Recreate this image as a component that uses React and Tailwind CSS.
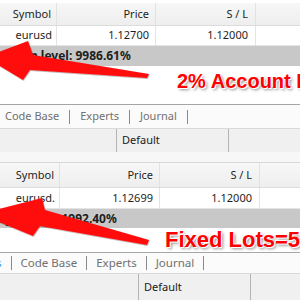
import React from 'react';

const ui = "font-['Noto_Sans',sans-serif] text-[11px] text-[#1e1e1e]";

const Panel = ({ cols, symbol, price, sl, levelText, levelOffset, note, noteClass, whiteH, tabs, statusLeft, statusWidth, headH, rowH, barH, tabH, statusH, topStrip }) => (
  <div className={`flex flex-col ${ui}`}>
    {topStrip}
    {/* header */}
    <div className={`flex ${headH} border-b border-[#dcdcdc] bg-gradient-to-b from-[#f7f7f7] to-[#eeeeee]`}>
      <div className={`${cols[0]} flex items-center justify-end pr-[5px] border-r border-[#e2e2e2]`}>Symbol</div>
      <div className={`${cols[1]} flex items-center justify-end pr-[6px] border-r border-[#e2e2e2]`}>Price</div>
      <div className={`${cols[2]} flex items-center justify-end pr-[7px] border-r border-[#e2e2e2]`}>S / L</div>
      <div className="flex-1" />
    </div>
    {/* data row */}
    <div className={`flex ${rowH} bg-white border-b border-[#e4e4e4]`}>
      <div className={`${cols[0]} flex items-center justify-end pr-[4px] border-r border-[#e4e4e4]`}>{symbol}</div>
      <div className={`${cols[1]} flex items-center justify-end pr-[6px] border-r border-[#e4e4e4]`}>{price}</div>
      <div className={`${cols[2]} flex items-center justify-end pr-[7px] border-r border-[#e4e4e4]`}>{sl}</div>
      <div className="flex-1" />
    </div>
    {/* margin level bar */}
    <div className={`flex items-center ${barH} bg-[#c8c8c8] overflow-hidden whitespace-nowrap`}>
      <span className={`font-bold text-[12px] text-[#202020] ${levelOffset}`}>{levelText}</span>
    </div>
    {/* white area with note */}
    <div className={`${whiteH} bg-white overflow-hidden whitespace-nowrap`}>
      <div className={`font-['Liberation_Sans',Arial,sans-serif] font-bold leading-none text-[#ff0000] [text-shadow:1px_1px_0_#ffffff,-1px_-1px_0_#ffffff,2px_2px_3px_rgba(0,0,0,0.45)] ${noteClass}`}>
        {note}
      </div>
    </div>
    {/* tabs */}
    <div className={`flex items-center ${tabH} bg-[#fbfbfb] border-t border-[#a6a6a6] whitespace-nowrap overflow-hidden text-[#707070]`}>
      {tabs}
    </div>
    {/* status */}
    <div className={`flex ${statusH} bg-[#f0f0f0] border-t border-[#d9d9d9]`}>
      <div className={`${statusLeft} border-r border-[#b4b4b4]`} />
      <div className={`${statusWidth} flex items-center pl-[5px] border-r border-[#b4b4b4] text-[#1a1a1a]`}>Default</div>
      <div className="flex-1" />
    </div>
  </div>
);

const Sep = () => <span className="w-px h-[14px] bg-[#8a8a8a] shrink-0" />;

const TopTabs = () => (
  <div className="flex items-center gap-[10px] pl-[5px]">
    <span>Code Base</span>
    <Sep />
    <span>Experts</span>
    <Sep />
    <span>Journal</span>
    <Sep />
  </div>
);

const BottomTabs = () => (
  <div className="flex items-center gap-[9px] ml-[-4px] text-[11.5px]">
    <span className="text-[#3c8fe0]">s</span>
    <Sep />
    <span>Code Base</span>
    <Sep />
    <span>Experts</span>
    <Sep />
    <span>Journal</span>
    <Sep />
  </div>
);

const Arrows = () => (
  <svg className="absolute left-0 top-0 w-[300px] h-[300px] pointer-events-none" viewBox="0 0 300 300">
    <defs>
      <filter id="sh" x="-20%" y="-20%" width="140%" height="140%">
        <feDropShadow dx="0.6" dy="0.8" stdDeviation="0.6" floodColor="#000" floodOpacity="0.35" />
      </filter>
    </defs>
    <polygon
      points="-15,57 28,41 33,55 149,74 147,78 30,70 23,80"
      fill="#ff0d0d"
      filter="url(#sh)"
    />
    <polygon
      points="-20,214 42,198 45,210 149,240 147,245 40,226 33,236"
      fill="#ff0d0d"
      filter="url(#sh)"
    />
  </svg>
);

export default function App() {
  return (
    <div className="relative w-[300px] h-[300px] overflow-hidden bg-white">
      <Panel
        topStrip={<div className="h-[3px] bg-white" />}
        cols={['w-[57px]', 'w-[99px]', 'w-[100px]']}
        symbol="eurusd"
        price="1.12700"
        sl="1.12000"
        levelText="Margin level: 9986.61%"
        levelOffset="ml-[-5px]"
        note="2% Account Risk"
        noteClass="text-[20px] pl-[177px] pt-[5px]"
        whiteH="h-[38px]"
        headH="h-[23px]"
        rowH="h-[20px]"
        barH="h-[20px]"
        tabH="h-[24px]"
        statusH="h-[24px]"
        tabs={<TopTabs />}
        statusLeft="w-[117px]"
        statusWidth="w-[112px]"
      />
      <Panel
        topStrip={<div className="h-[11px] bg-[#f7f7f7] border-b border-[#d8d8d8]" />}
        cols={['w-[60px]', 'w-[100px]', 'w-[100px]']}
        symbol="eurusd."
        price="1.12699"
        sl="1.12000"
        levelText="Margin level: 1992.40%"
        levelOffset="ml-[-19px]"
        note="Fixed Lots=5.00"
        noteClass="text-[22px] pl-[165px] pt-[1px]"
        whiteH="h-[24px]"
        headH="h-[25px]"
        rowH="h-[21px]"
        barH="h-[19px]"
        tabH="h-[21px]"
        statusH="h-[27px]"
        tabs={<BottomTabs />}
        statusLeft="w-[139px]"
        statusWidth="w-[112px]"
      />
      <Arrows />
    </div>
  );
}
